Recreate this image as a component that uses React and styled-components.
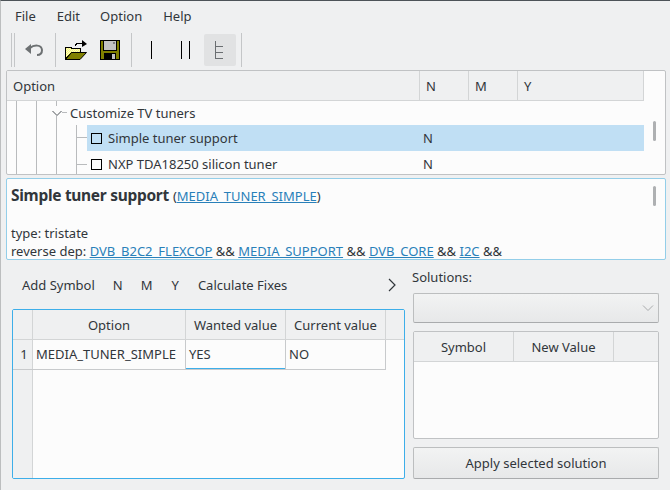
import React from "react";
import styled, { createGlobalStyle } from "styled-components";

const Global = createGlobalStyle`
  html, body { margin: 0; padding: 0; width: 670px; height: 490px; overflow: hidden; }
  body { font-family: "Noto Sans", sans-serif; font-size: 13px; color: #31363b; background: #eff0f1; }
  * { box-sizing: border-box; }
`;

const Win = styled.div`
  width: 670px; height: 490px; background: #eff0f1;
  border-top: 1px solid #4d5358; border-left: 1px solid #bcbebf;
  display: flex; flex-direction: column;
`;
const MenuBar = styled.div`
  height: 30px; display: flex; align-items: center; padding-left: 14px; gap: 20px; padding-bottom: 1px;
`;
const MenuItem = styled.span`
  line-height: 18px; margin-right: ${p => p.$mr || 0}px;
`;
const ToolBar = styled.div`
  height: 38px; display: flex; align-items: center; padding-left: 9px;
`;
const Handle = styled.div`
  width: 4px; height: 34px; margin-right: 4px; border-left: 1px solid #c4c6c8; border-right: 1px solid #c4c6c8;
  margin-left: 1px;
`;
const Sep = styled.div`
  width: 1px; height: 34px; background: #c4c6c8; margin: 0 ${p => p.$r || 4}px 0 ${p => p.$l || 4}px;
`;
const ToolBtn = styled.div`
  width: ${p => p.$w || 32}px; height: 32px; display: flex; align-items: center; justify-content: center;
  border-radius: 2px; background: ${p => (p.$active ? "#e1e2e3" : "transparent")};
  margin-right: ${p => p.$mr || 0}px;
`;
const Panel = styled.div`
  margin: 1px 4px 0 5px; height: 105px; background: #fcfcfc; border: 1px solid #c0c2c4; border-radius: 2px;
  position: relative; overflow: hidden;
`;
const TreeHead = styled.div`
  display: flex; height: 30px; width: 637px; background: #eff0f1; border-bottom: 1px solid #d3d5d6;
`;
const HeadCell = styled.div`
  width: ${p => p.$w}px; flex: ${p => (p.$w ? "none" : 1)}; display: flex; align-items: center; padding-left: 6px;
  border-right: 1px solid #d3d5d6;
`;
const TreeRow = styled.div`
  display: flex; height: ${p => p.$h}px; width: 637px; align-items: center;
`;
const Gutter = styled.svg`
  width: 80px; height: 100%; flex: none; display: block;
`;
const RowBody = styled.div`
  display: flex; align-items: center; flex: 1; height: 100%;
  background: ${p => (p.$sel ? "#c0dff4" : "transparent")};
  padding-top: ${p => p.$pt || 0}px;
`;
const Tick = styled.span`
  width: 11px; height: 11px; border: 1px solid #000; margin: 0 6px 0 4px; flex: none;
`;
const RowName = styled.span`
  width: 315px; flex: none;
`;
const ExpanderName = styled.span`
  margin-left: -17px;
`;
const Thumb = styled.div`
  position: absolute; right: 9px; top: ${p => p.$top}px; width: 3px; height: 20px; background: #aeb0b2; border-radius: 2px;
`;
const Info = styled.div`
  margin: 3px 4px 0 5px; height: 82px; background: #fcfcfc; border: 1px solid #93cee9; border-radius: 2px;
  padding: 4px 4px 0 4px; position: relative; overflow: hidden; white-space: nowrap;
`;
const Title = styled.div`
  line-height: 25px; height: 25px; display: flex; align-items: baseline;
`;
const TitleText = styled.b`
  font-size: 15.5px; font-weight: 700; margin-right: 4px; letter-spacing: -0.3px;
`;
const InfoLine = styled.div`
  line-height: 18px;
  margin-top: ${p => p.$mt || 0}px;
`;
const Link = styled.span`
  color: #2980b9; text-decoration: underline;
`;
const Bottom = styled.div`
  flex: 1; display: flex; margin-top: 6px; padding-left: 11px; padding-right: 11px;
`;
const LeftCol = styled.div`
  width: 393px; flex: none; display: flex; flex-direction: column;
`;
const ActionBar = styled.div`
  height: 43px; display: flex; align-items: center; padding-left: 10px; padding-bottom: 5px; position: relative;
`;
const ActionItem = styled.span`
  margin-right: ${p => p.$mr}px;
`;
const Chevron = styled.svg`
  position: absolute; right: 7px; top: 11px; width: 12px; height: 16px;
`;
const GridBox = styled.div`
  height: 170px; background: #fcfcfc; border: 1px solid #3daee9; border-radius: 2px; overflow: hidden;
  display: flex;
`;
const RowHeads = styled.div`
  width: 20px; flex: none; display: flex; flex-direction: column; background: #eff0f1; border-right: 1px solid #d3d5d6;
`;
const Corner = styled.div`
  height: 30px; border-bottom: 1px solid #d3d5d6;
`;
const RowHead = styled.div`
  height: 30px; border-bottom: 1px solid #c8cacc; display: flex; align-items: center; justify-content: center; padding-left: 2px;
  margin-right: -1px; padding-bottom: 1px;
`;
const GridMain = styled.div`
  flex: 1; display: flex; flex-direction: column;
`;
const GridHead = styled.div`
  display: flex; height: 30px; background: #eff0f1; border-bottom: 1px solid #d3d5d6;
`;
const GridHeadCell = styled.div`
  width: ${p => p.$w}px; flex: ${p => (p.$w ? "none" : 1)}; display: flex; align-items: center; justify-content: center;
  border-right: ${p => (p.$w ? "1px solid #d3d5d6" : "none")};
`;
const GridRow = styled.div`
  display: flex; height: 30px;
`;
const GridCell = styled.div`
  width: ${p => p.$w}px; flex: none; display: flex; align-items: center; padding: 0 0 1px 3px;
  border-right: 1px solid #c8cacc; border-bottom: 1px solid #c8cacc;
  box-shadow: ${p => (p.$focus ? "inset 0 -1px 0 #3daee9" : "none")};
`;
const RightCol = styled.div`
  flex: 1; margin-left: 8px; display: flex; flex-direction: column;
`;
const SolLabel = styled.div`
  line-height: 18px; height: 27px; padding-top: 2px; margin-left: -1px;
`;
const Combo = styled.div`
  height: 30px; border: 1px solid #bcbebf; border-bottom-color: #a9abad; border-radius: 2px;
  background: linear-gradient(#f2f3f3, #e7e8e9); display: flex; align-items: center; justify-content: flex-end; padding-right: 4px;
`;
const SolTable = styled.div`
  margin-top: 8px; height: 108px; background: #fcfcfc; border: 1px solid #c0c2c4; border-radius: 2px; overflow: hidden;
`;
const ApplyBtn = styled.div`
  margin-top: 8px; height: 32px; border: 1px solid #bcbebf; border-bottom-color: #a9abad; border-radius: 2px;
  background: linear-gradient(#f2f3f3, #e7e8e9); display: flex; align-items: center; justify-content: center;
`;

const UndoIcon = () => (
  <svg width="20" height="16" viewBox="0 0 20 16" fill="none">
    <path d="M1 7 L7 2 V12 Z" fill="#6d7173" />
    <path d="M6 6 C10 2.5 17.5 2.5 18 8 C18 11.5 16 13 13 13" stroke="#6d7173" strokeWidth="2" />
  </svg>
);
const OpenIcon = () => (
  <svg width="22" height="20" viewBox="0 0 22 20" shapeRendering="crispEdges">
    <defs>
      <pattern id="dither" width="2" height="2" patternUnits="userSpaceOnUse">
        <rect width="2" height="2" fill="#ffff66" />
        <rect width="1" height="1" fill="#f4f4d8" />
        <rect x="1" y="1" width="1" height="1" fill="#f4f4d8" />
      </pattern>
    </defs>
    <path d="M0.5 7.5 H6 V8.5 H15.5 V12.5 H7 L0.5 19 Z" fill="url(#dither)" stroke="#000" strokeWidth="1" />
    <path d="M6.5 12.5 H21.5 L15 19.5 H0.5 Z" fill="#808000" stroke="#000" strokeWidth="1" shapeRendering="geometricPrecision" />
    <path d="M10 6 V4 H11 V3 H17 V1" fill="none" stroke="#000" strokeWidth="1" />
    <path d="M17 0 L22 4 L17 7 Z" fill="#000" shapeRendering="geometricPrecision" />
  </svg>
);
const SaveIcon = () => (
  <svg width="20" height="20" viewBox="0 0 20 20" shapeRendering="crispEdges">
    <rect x="0" y="0" width="20" height="20" fill="#000" />
    <rect x="1" y="1" width="18" height="18" fill="#808000" />
    <rect x="3" y="1" width="14" height="10" fill="#000" />
    <rect x="4" y="1" width="12" height="9" fill="#c3c3c3" />
    <rect x="13" y="2" width="2" height="2" fill="#808080" />
    <rect x="4" y="13" width="12" height="6" fill="#000" />
    <rect x="12" y="14" width="3" height="5" fill="#c3c3c3" />
  </svg>
);
const SingleIcon = () => (
  <svg width="16" height="18" viewBox="0 0 16 18" shapeRendering="crispEdges"><rect x="7" width="1" height="18" fill="#000" /></svg>
);
const DoubleIcon = () => (
  <svg width="16" height="18" viewBox="0 0 16 18" shapeRendering="crispEdges">
    <rect x="4" width="1" height="18" fill="#000" /><rect x="12" width="1" height="18" fill="#000" />
  </svg>
);
const TreeIcon = () => (
  <svg width="10" height="18" viewBox="0 0 10 18" shapeRendering="crispEdges" fill="#6a6e71">
    <rect x="0" width="1" height="18" /><rect x="0" y="5" width="8" height="1" /><rect x="0" y="11" width="8" height="1" /><rect x="0" y="17" width="8" height="1" />
  </svg>
);
const guideColor = "#b9bbbd";
const Guides = ({ h, y }) => (
  <Gutter viewBox={`0 0 80 ${h}`} shapeRendering="crispEdges">
    {[9, 29, 49, 69].map(x => <rect key={x} x={x} y="0" width="1" height={h} fill={guideColor} />)}
    <rect x="70" y={y} width="10" height="1" fill={guideColor} />
  </Gutter>
);

export default function App() {
  return (
    <Win>
      <Global />
      <MenuBar>
        <MenuItem $mr={1}>File</MenuItem>
        <MenuItem>Edit</MenuItem>
        <MenuItem $mr={1}>Option</MenuItem>
        <MenuItem>Help</MenuItem>
      </MenuBar>
      <ToolBar>
        <Handle />
        <ToolBtn $w={30}><UndoIcon /></ToolBtn>
        <Sep $l={6} $r={5} />
        <ToolBtn $w={30} $mr={3}><OpenIcon /></ToolBtn>
        <ToolBtn $w={32}><SaveIcon /></ToolBtn>
        <Sep $l={5} $r={4} />
        <ToolBtn><SingleIcon /></ToolBtn>
        <ToolBtn $w={34} $mr={2}><DoubleIcon /></ToolBtn>
        <ToolBtn $active><TreeIcon /></ToolBtn>
        <Sep $l={5} />
      </ToolBar>
      <Panel>
        <TreeHead>
          <HeadCell $w={413}>Option</HeadCell>
          <HeadCell $w={49}>N</HeadCell>
          <HeadCell $w={49}>M</HeadCell>
          <HeadCell>Y</HeadCell>
        </TreeHead>
        <TreeRow $h={24}>
          <Gutter viewBox="0 0 80 24">
            <g shapeRendering="crispEdges">
              <rect x="9" width="1" height="24" fill={guideColor} />
              <rect x="29" width="1" height="24" fill={guideColor} />
              <rect x="49" width="1" height="5" fill={guideColor} />
              <rect x="49" y="15" width="1" height="9" fill={guideColor} />
              <rect x="55" y="11" width="5" height="1" fill={guideColor} />
            </g>
            <path d="M45.5 10 L50 14.5 L54.5 10" fill="none" stroke="#4d5257" strokeWidth="1" />
          </Gutter>
          <ExpanderName>Customize TV tuners</ExpanderName>
        </TreeRow>
        <TreeRow $h={26}>
          <Guides h={26} y={12} />
          <RowBody $sel>
            <Tick />
            <RowName>Simple tuner support</RowName>
            <span>N</span>
          </RowBody>
        </TreeRow>
        <TreeRow $h={24}>
          <Guides h={24} y={13} />
          <RowBody $pt={2}>
            <Tick />
            <RowName>NXP TDA18250 silicon tuner</RowName>
            <span>N</span>
          </RowBody>
        </TreeRow>
        <Thumb $top={50} />
      </Panel>
      <Info>
        <Title>
          <TitleText>Simple tuner support</TitleText>
          <span>(<Link>MEDIA_TUNER_SIMPLE</Link>)</span>
        </Title>
        <InfoLine $mt={16}>type: tristate</InfoLine>
        <InfoLine>
          reverse dep: <Link>DVB_B2C2_FLEXCOP</Link> &amp;&amp; <Link>MEDIA_SUPPORT</Link> &amp;&amp; <Link>DVB_CORE</Link> &amp;&amp; <Link>I2C</Link> &amp;&amp;
        </InfoLine>
        <Thumb $top={7} />
      </Info>
      <Bottom>
        <LeftCol>
          <ActionBar>
            <ActionItem $mr={18}>Add Symbol</ActionItem>
            <ActionItem $mr={18}>N</ActionItem>
            <ActionItem $mr={19}>M</ActionItem>
            <ActionItem $mr={19}>Y</ActionItem>
            <ActionItem $mr={0}>Calculate Fixes</ActionItem>
            <Chevron viewBox="0 0 12 16" fill="none" stroke="#31363b" strokeWidth="1.2">
              <path d="M3 2 L9 8 L3 14" />
            </Chevron>
          </ActionBar>
          <GridBox>
            <RowHeads>
              <Corner />
              <RowHead>1</RowHead>
            </RowHeads>
            <GridMain>
              <GridHead>
                <GridHeadCell $w={153}>Option</GridHeadCell>
                <GridHeadCell $w={100}>Wanted value</GridHeadCell>
                <GridHeadCell $w={100}>Current value</GridHeadCell>
                <GridHeadCell />
              </GridHead>
              <GridRow>
                <GridCell $w={153}>MEDIA_TUNER_SIMPLE</GridCell>
                <GridCell $w={100} $focus>YES</GridCell>
                <GridCell $w={100}>NO</GridCell>
              </GridRow>
            </GridMain>
          </GridBox>
        </LeftCol>
        <RightCol>
          <SolLabel>Solutions:</SolLabel>
          <Combo>
            <svg width="12" height="8" viewBox="0 0 12 8" fill="none" stroke="#a9abad" strokeWidth="1"><path d="M1 1.5 L6 6.5 L11 1.5" /></svg>
          </Combo>
          <SolTable>
            <GridHead>
              <GridHeadCell $w={100}>Symbol</GridHeadCell>
              <GridHeadCell $w={100}>New Value</GridHeadCell>
              <GridHeadCell />
            </GridHead>
          </SolTable>
          <ApplyBtn>Apply selected solution</ApplyBtn>
        </RightCol>
      </Bottom>
    </Win>
  );
}
